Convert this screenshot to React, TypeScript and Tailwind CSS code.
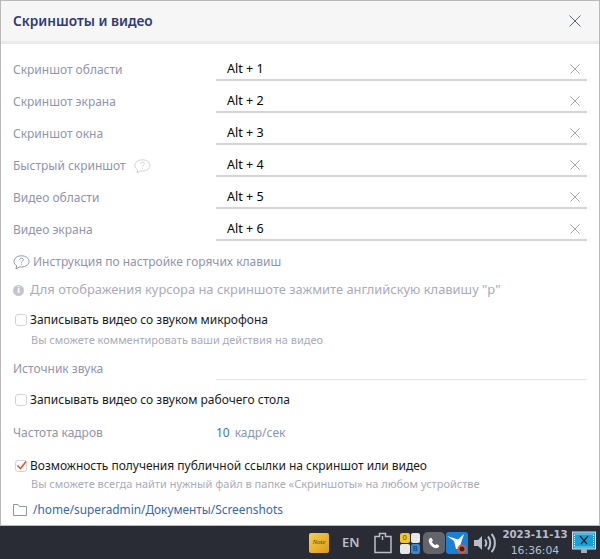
import React from "react";

const hotkeys = [
  { label: "Скриншот области", value: "Alt + 1" },
  { label: "Скриншот экрана", value: "Alt + 2" },
  { label: "Скриншот окна", value: "Alt + 3" },
  { label: "Быстрый скриншот", value: "Alt + 4", hint: true },
  { label: "Видео области", value: "Alt + 5" },
  { label: "Видео экрана", value: "Alt + 6" },
];

const Cross = ({ size = 11, className = "" }: { size?: number; className?: string }) => (
  <svg width={size} height={size} viewBox="0 0 12 12" fill="none" stroke="currentColor" strokeWidth="1" className={className}>
    <path d="M0.5 0.5L11.5 11.5M11.5 0.5L0.5 11.5" />
  </svg>
);

const Bubble = ({ className = "" }: { className?: string }) => (
  <svg width="17" height="15" viewBox="0 0 17 15" fill="none" stroke="currentColor" strokeWidth="1" className={className}>
    <path d="M8.5 0.8C4.4 0.8 1 3.2 1 6.4C1 8.2 2 9.7 3.7 10.7L3 14L6.8 11.8C7.4 11.9 7.9 12 8.5 12C12.6 12 16 9.600 16 6.400C16 3.200 12.6 0.800 8.500 0.800Z" />
    <path d="M6.600 4.900C6.700 3.800 7.500 3.200 8.500 3.200C9.600 3.200 10.400 3.900 10.400 4.800C10.400 6.100 8.500 6.200 8.500 7.600" />
    <path d="M8.500 8.700V9.700" />
  </svg>
);

const Checkbox = ({ checked = false }: { checked?: boolean }) => (
  <span className="relative block h-[12px] w-[12px] shrink-0 rounded-[3px] border border-[#d3d4da] bg-white">
    {checked && (
      <svg width="12" height="11" viewBox="0 0 12 11" fill="none" stroke="#e2562a" strokeWidth="1.500" className="absolute -top-px left-0">
        <path d="M1.500 5.500L4.500 8.500L10 1.500" />
      </svg>
    )}
  </span>
);

const App = () => {
  return (
    <div className="flex h-[559px] w-[600px] flex-col overflow-hidden bg-white font-['Noto_Sans',sans-serif]">
      {/* Window */}
      <div className="flex h-[526px] flex-col border-x border-t border-b border-[#b9b9b9] bg-white">
        <div className="flex h-[43px] shrink-0 items-center justify-between border-b-[3px] border-[#ebebeb] bg-[#f6f6f6] pl-3 pr-[18px]">
          <span className="pt-px text-[13.700px] font-semibold text-[#2f3a74]">Скриншоты и видео</span>
          <Cross size={12} className="text-[#5d6478]" />
        </div>

        <div className="flex flex-1 flex-col pl-3 pr-3">
          <div className="mt-[13px] flex flex-col">
            {hotkeys.map((row) => (
              <div key={row.value} className="flex h-8 items-start">
                <div className="flex h-[26px] w-[203px] items-center gap-2 text-[12px] text-[#9094ad]">
                  <span>{row.label}</span>
                  {row.hint && <Bubble className="text-[#d0d1d8]" />}
                </div>
                <div className="flex h-6 flex-1 items-center justify-between border-b-2 border-[#d3d4da] pl-[11px] pr-[7px] pt-[2px] text-[12.500px] text-black">
                  <span>{row.value}</span>
                  <Cross size={10} className="text-[#8f93a8]" />
                </div>
              </div>
            ))}
          </div>

          <div className="mt-px flex h-6 items-center gap-[3px] text-[12px] text-[#9094ad]">
            <Bubble className="text-[#8f93a8]" />
            <span>Инструкция по настройке горячих клавиш</span>
          </div>

          <div className="mt-[4px] flex h-6 items-center gap-[6px] text-[12.900px] text-[#a9abb9]">
            <span className="flex h-[11px] w-[11px] items-center justify-center rounded-full bg-[#c4c6cf] text-[9px] font-bold text-white">i</span>
            <span>Для отображения курсора на скриншоте зажмите английскую клавишу "р"</span>
          </div>

          <div className="mt-[8px] flex h-5 items-center gap-[3px] pl-[2px] text-[12px] text-[#1a1a1a]">
            <Checkbox />
            <span>Записывать видео со звуком микрофона</span>
          </div>
          <div className="mt-px pl-[18px] text-[11px] leading-[18px] text-[#a9abb9]">
            Вы сможете комментировать ваши действия на видео
          </div>

          <div className="mt-[9px] flex h-[22px] items-center">
            <span className="w-[203px] text-[12px] text-[#9094ad]">Источник звука</span>
            <div className="h-full flex-1 border-b border-[#e2e3e7]" />
          </div>

          <div className="mt-[10px] flex h-5 items-center gap-[3px] pl-[2px] text-[12px] text-[#1a1a1a]">
            <Checkbox />
            <span>Записывать видео со звуком рабочего стола</span>
          </div>

          <div className="mt-[13px] flex h-5 items-center text-[12px] text-[#9094ad]">
            <span className="w-[203px]">Частота кадров</span>
            <span className="mr-[5px] text-[#3f73b5]">10</span>
            <span>кадр/сек</span>
          </div>

          <div className="mt-[13px] flex h-5 items-center gap-[3px] pl-[2px] text-[12px] text-[#1a1a1a]">
            <Checkbox checked />
            <span className="tracking-[-0.020px]">Возможность получения публичной ссылки на скриншот или видео</span>
          </div>
          <div className="pl-[18px] text-[11px] leading-4 text-[#a9abb9]">
            Вы сможете всегда найти нужный файл в папке «Скриншоты» на любом устройстве
          </div>

          <div className="mt-[8px] flex h-5 items-center gap-[6px] text-[11.850px] text-[#3568ac]">
            <svg width="14" height="12" viewBox="0 0 14 12" fill="none" stroke="#8f93a8" strokeWidth="1">
              <path d="M0.500 0.500H5L6.500 2.500H13.500V11.500H0.500Z" />
            </svg>
            <span>/home/superadmin/Документы/Screenshots</span>
          </div>
        </div>
      </div>

      {/* Taskbar */}
      <div className="flex flex-1 items-center justify-end bg-[#292c35] pr-[4px]">
        <div className="mr-[13px] flex h-5 w-5 items-center justify-center rounded-[2px] bg-gradient-to-br from-[#f8d048] to-[#d99a1c] font-['Liberation_Serif',serif] text-[7px] italic text-[#5a4210]">
          Note
        </div>
        <span className="mr-[14px] w-[18px] text-[13px] font-semibold text-[#b9bec9]">EN</span>
        <svg width="18" height="22" viewBox="0 0 18 22" fill="none" stroke="#b9bec9" strokeWidth="1.500" className="mr-[8px]">
          <path d="M1 4.500H5.500V1.500H11.500V4.500H17V20.500H1Z" />
          <path d="M8.500 4V8" />
        </svg>
        <div className="mr-[3px] grid h-5 w-5 grid-cols-2 gap-px text-center font-['Liberation_Sans',sans-serif] text-[7px] leading-[10px] text-[#5a4210]">
          <span className="rounded-[2px] bg-[#f3c331]">0</span>
          <span className="rounded-[2px] bg-[#e8e8e8]" />
          <span className="rounded-[2px] bg-[#e8e8e8]" />
          <span className="rounded-[2px] bg-[#3b8ad0] text-[#12324f]">B</span>
        </div>
        <div className="mr-px flex h-[22px] w-[22px] items-center justify-center rounded-[5px] bg-[#63656b]">
          <svg width="12" height="12" viewBox="0 0 24 24" fill="white">
            <path d="M6.600 1.500L10 7L7.600 9.500C8.800 12.200 11.800 15.200 14.500 16.400L17 14L22.500 17.400C22 20.500 19.500 22.500 17 22.500C9 22 2 15 1.500 7C1.500 4.500 3.500 2 6.600 1.500Z" />
          </svg>
        </div>
        <svg width="22" height="22" viewBox="0 0 22 22" className="mr-[5px]">
          <path d="M0 3C0 1 1 0 3 0H19C21 0 22 1 22 3V22H3C1 22 0 21 0 19Z" fill="#1c7fd6" />
          <path d="M1 4L12 7.500L18 2L13 17H10L8 9Z" fill="white" />
          <circle cx="16" cy="17" r="3.500" fill="#292c35" stroke="#e8552a" strokeWidth="2" />
        </svg>
        <svg width="24" height="24" viewBox="0 0 24 24" fill="none" stroke="#b9bec9" strokeWidth="2" className="mr-[6px]">
          <path d="M1 9H5L9 5V19L5 15H1Z" fill="#b9bec9" stroke="none" />
          <path d="M12 8.500C13.500 10.500 13.500 13.500 12 15.500" />
          <path d="M15 5.500C18 9 18 15 15 18.500" />
          <path d="M18.500 3C23 8 23 16 18.500 21" />
        </svg>
        <div className="mr-[5px] flex w-[64px] flex-col items-center whitespace-nowrap font-['DejaVu_Sans',sans-serif] text-[10.800px] leading-[16px] text-[#b9bec9]">
          <span className="text-[10.200px] font-bold">2023-11-13</span>
          <span>16:36:04</span>
        </div>
        <svg width="24" height="24" viewBox="0 0 24 24">
          <rect x="0.500" y="1" width="23" height="17" fill="#18a0d8" stroke="#dfe3e8" />
          <rect x="2.500" y="3" width="19" height="13" fill="none" stroke="#fff" strokeDasharray="1 1" />
          <path d="M8 5L15 13M16 5L9 13" stroke="#12222c" strokeWidth="1.300" />
          <path d="M9 18H15V22H9Z" fill="#a7abb3" />
        </svg>
      </div>
    </div>
  );
};

export default App;
